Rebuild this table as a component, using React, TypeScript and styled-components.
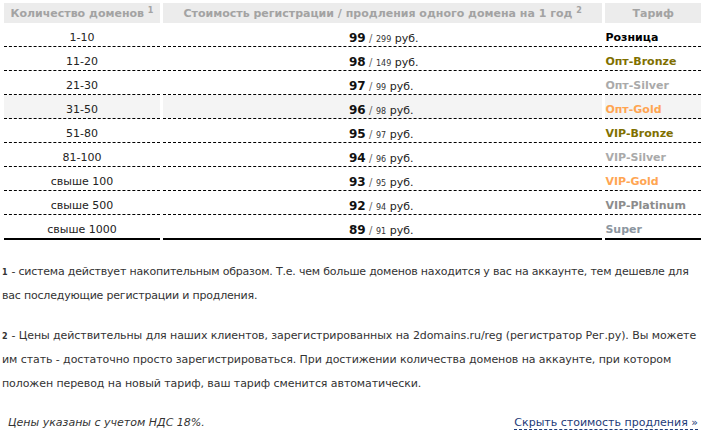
import styled, { createGlobalStyle } from 'styled-components';

const GlobalStyle = createGlobalStyle`
  body {
    margin: 0;
    background: #fff;
    font-family: "DejaVu Sans", Verdana, sans-serif;
    font-size: 11px;
    color: #333;
  }
`;

const Page = styled.div`
  width: 707px;
  padding: 3px 2px 0 2px;
  box-sizing: border-box;
`;

const PriceTable = styled.table`
  width: 703px;
  margin-left: -1px;
  border-collapse: separate;
  border-spacing: 3px 0;
  color: #222;
`;

const HeadCell = styled.th<{ $w: number }>`
  width: ${(p) => p.$w}px;
  height: 20px;
  padding: 0;
  background: #ececec;
  color: #a3a3a3;
  font-weight: bold;
  font-size: 11px;
  text-align: center;
  vertical-align: middle;

  sup {
    font-size: 8px;
    vertical-align: 4px;
  }
`;

const Row = styled.tr<{ $hl?: boolean }>`
  td {
    background: ${(p) => (p.$hl ? '#f4f4f4' : 'transparent')};
  }
`;

const Cell = styled.td<{ $last?: boolean }>`
  height: 17px;
  padding: 6px 0 0 0;
  vertical-align: middle;
  border-bottom: ${(p) => (p.$last ? '2px solid #000' : '1px dashed #000')};
  white-space: nowrap;
`;

const CountCell = styled(Cell)`
  text-align: center;
`;

const PriceCell = styled(Cell)`
  padding-left: 186px;
`;

const TariffCell = styled(Cell)`
  padding-left: 0;
`;

const RegPrice = styled.b`
  font-size: 12px;
  color: #111;
`;

const Slash = styled.span`
  color: #666;
  font-size: 10px;
`;

const RenewPrice = styled.span`
  font-size: 8px;
  color: #333;
`;

const Tariff = styled.b<{ $c: string }>`
  color: ${(p) => p.$c};
  font-size: 11px;
`;

const Note = styled.p<{ $ls: number }>`
  margin: 20px 0 16px 0;
  line-height: 24px;
  font-size: 11px;
  letter-spacing: ${(p) => p.$ls}px;
  color: #333;

  & + & {
    margin-top: 0;
  }
`;

const NoteMark = styled.b`
  display: inline-block;
  margin-right: 4px;
  font-size: 8px;
  line-height: 10px;
`;

const Footer = styled.div`
  display: flex;
  justify-content: space-between;
  align-items: baseline;
  padding: 4px 7px 0 6px;
`;

const Vat = styled.i`
  font-size: 11px;
  color: #333;
`;

const HideLink = styled.a`
  color: #1d3a78;
  text-decoration: none;
  border-bottom: 1px dashed #1d3a78;
  cursor: pointer;
  font-size: 11px;
`;

type Item = { count: string; reg: number; renew: number; tariff: string; color: string };

const rows: Item[] = [
  { count: '1-10', reg: 99, renew: 299, tariff: 'Розница', color: '#000' },
  { count: '11-20', reg: 98, renew: 149, tariff: 'Опт-Bronze', color: '#7f7000' },
  { count: '21-30', reg: 97, renew: 99, tariff: 'Опт-Silver', color: '#aaa' },
  { count: '31-50', reg: 96, renew: 98, tariff: 'Опт-Gold', color: '#ffa552' },
  { count: '51-80', reg: 95, renew: 97, tariff: 'VIP-Bronze', color: '#7f7000' },
  { count: '81-100', reg: 94, renew: 96, tariff: 'VIP-Silver', color: '#aaa' },
  { count: 'свыше 100', reg: 93, renew: 95, tariff: 'VIP-Gold', color: '#ffa552' },
  { count: 'свыше 500', reg: 92, renew: 94, tariff: 'VIP-Platinum', color: '#8c8c8c' },
  { count: 'свыше 1000', reg: 89, renew: 91, tariff: 'Super', color: '#8c96a0' },
];

export default function App() {
  return (
    <Page>
      <GlobalStyle />
      <PriceTable>
        <thead>
          <tr>
            <HeadCell $w={155}>
              Количество доменов <sup>1</sup>
            </HeadCell>
            <HeadCell $w={437}>
              Стоимость регистрации / продления одного домена на 1 год <sup>2</sup>
            </HeadCell>
            <HeadCell $w={95}>Тариф</HeadCell>
          </tr>
        </thead>
        <tbody>
          {rows.map((r, i) => {
            const last = i === rows.length - 1;
            return (
              <Row key={r.count} $hl={r.count === '31-50'}>
                <CountCell $last={last}>{r.count}</CountCell>
                <PriceCell $last={last}>
                  <RegPrice>{r.reg}</RegPrice> <Slash>/</Slash> <RenewPrice>{r.renew}</RenewPrice> руб.
                </PriceCell>
                <TariffCell $last={last}>
                  <Tariff $c={r.color}>{r.tariff}</Tariff>
                </TariffCell>
              </Row>
            );
          })}
        </tbody>
      </PriceTable>

      <Note $ls={-0.2}>
        <NoteMark>1</NoteMark>- система действует накопительным образом. Т.е. чем больше доменов находится у вас на аккаунте, тем дешевле для вас последующие регистрации и продления.
      </Note>
      <Note $ls={-0.08}>
        <NoteMark>2</NoteMark>- Цены действительны для наших клиентов, зарегистрированных на 2domains.ru/reg (регистратор Рег.ру). Вы можете им стать - достаточно просто зарегистрироваться. При достижении количества доменов на аккаунте, при котором положен перевод на новый тариф, ваш тариф сменится автоматически.
      </Note>

      <Footer>
        <Vat>Цены указаны с учетом НДС 18%.</Vat>
        <HideLink>Скрыть стоимость продления »</HideLink>
      </Footer>
    </Page>
  );
}
